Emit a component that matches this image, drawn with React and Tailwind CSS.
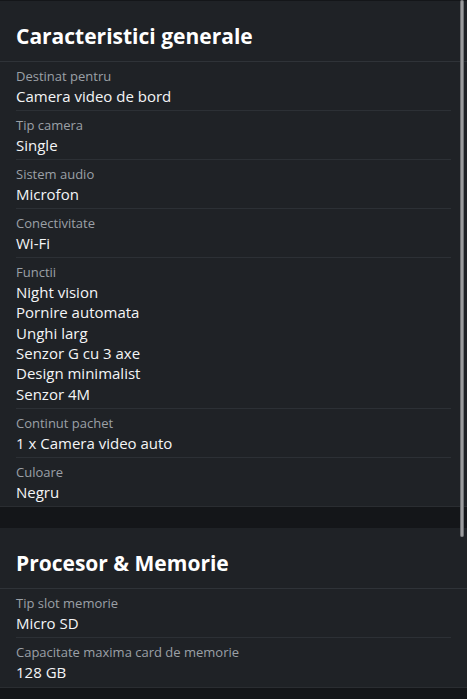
import React from 'react'

const sections = [
  {
    title: 'Caracteristici generale',
    rows: [
      { label: 'Destinat pentru', values: ['Camera video de bord'] },
      { label: 'Tip camera', values: ['Single'] },
      { label: 'Sistem audio', values: ['Microfon'] },
      { label: 'Conectivitate', values: ['Wi-Fi'] },
      {
        label: 'Functii',
        values: ['Night vision', 'Pornire automata', 'Unghi larg', 'Senzor G cu 3 axe', 'Design minimalist', 'Senzor 4M'],
      },
      { label: 'Continut pachet', values: ['1 x Camera video auto'] },
      { label: 'Culoare', values: ['Negru'] },
    ],
  },
  {
    title: 'Procesor & Memorie',
    rows: [
      { label: 'Tip slot memorie', values: ['Micro SD'] },
      { label: 'Capacitate maxima card de memorie', values: ['128 GB'] },
    ],
  },
]

function SpecRow({ label, values }) {
  return (
    <div className="border-b border-[#2c3035] last:border-b-0 pt-[6px] pb-[4px]">
      <div className="text-[13px] leading-[1.36] text-[#9ba0a6]">{label}</div>
      {values.map((v) => (
        <div key={v} className="text-[15px] leading-[1.36] text-[#f4f5f6]">
          {v}
        </div>
      ))}
    </div>
  )
}

export default function App() {
  return (
    <div className="relative min-h-screen bg-[#141619] pt-[1px] font-['Open_Sans',sans-serif] flex flex-col gap-[21px] overflow-hidden">
      {sections.map((s) => (
        <section key={s.title} className="bg-[#1f2226] border-b border-[#2a2d31]">
          <h2 className="px-4 pt-[20px] pb-[10px] text-[21px] leading-[30px] font-bold text-white border-b border-[#2f3338]">
            {s.title}
          </h2>
          <div className="px-4">
            {s.rows.map((r) => (
              <SpecRow key={r.label} {...r} />
            ))}
          </div>
        </section>
      ))}

      {/* overlay scrollbar */}
      <div className="absolute top-0 right-[3px] w-[4px] h-[537px] rounded-[2px] bg-[#9a9b9d] border-x border-[#6f7174]" />
    </div>
  )
}
